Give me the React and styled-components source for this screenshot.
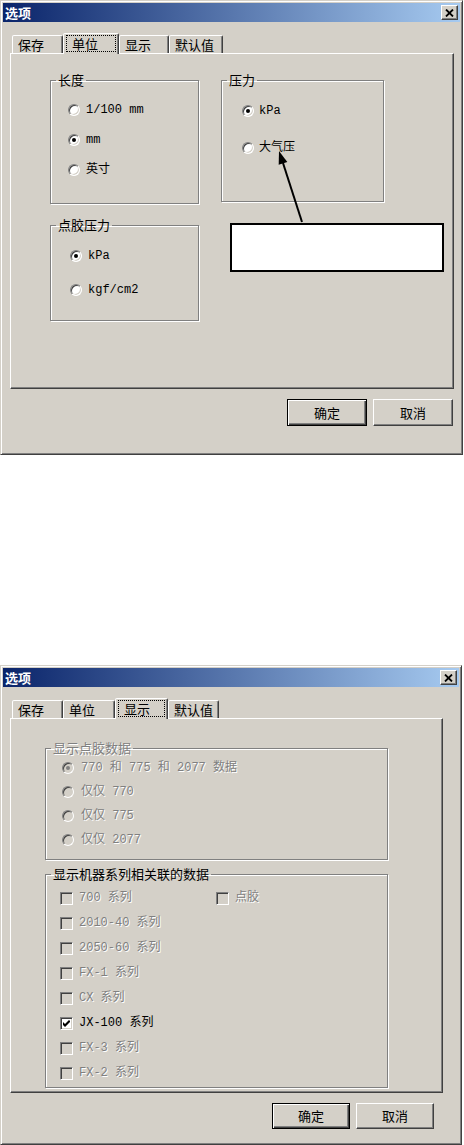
import React from 'react'
import styled, { createGlobalStyle, css } from 'styled-components'

const FACE = '#d4d0c8'
const SHADOW = '#808080'
const DARK = '#404040'
const CJK = '"Noto Sans CJK SC", sans-serif'
const LABEL = '"Liberation Mono", "Noto Sans CJK SC", monospace'

const GlobalStyle = createGlobalStyle`
  body {
    margin: 0;
    background: #fff;
  }
`

const Page = styled.div`
  width: 464px;
  display: flex;
  flex-direction: column;
  gap: 210px;
`

const Window = styled.div`
  box-sizing: border-box;
  width: ${p => p.$w}px;
  height: ${p => p.$h}px;
  background: ${FACE};
  border: 1px solid;
  border-color: ${FACE} ${DARK} ${DARK} ${FACE};
  box-shadow: inset 1px 1px #fff, inset -1px -1px ${SHADOW};
  padding: 2px;
  display: flex;
  flex-direction: column;
`

const TitleBar = styled.div`
  height: 19px;
  flex: none;
  display: flex;
  align-items: center;
  justify-content: space-between;
  padding: 0 2px 0 2px;
  background: linear-gradient(to right, #0a246a, #a6caf0);
`

const Title = styled.span`
  color: #fff;
  font: bold 13px/19px ${CJK};
`

const CloseBox = styled.div`
  box-sizing: border-box;
  width: 17px;
  height: 15px;
  background: ${FACE};
  border: 1px solid;
  border-color: #fff ${DARK} ${DARK} #fff;
  box-shadow: inset -1px -1px ${SHADOW};
  display: flex;
  align-items: center;
  justify-content: center;
`

const Body = styled.div`
  padding: 11px 0 0 7px;
  display: flex;
  flex-direction: column;
`

const TabStrip = styled.div`
  height: 20px;
  display: flex;
  align-items: flex-end;
  padding-left: 2px;
  position: relative;
  z-index: 1;
`

const Tab = styled.div`
  box-sizing: border-box;
  width: ${p => p.$w}px;
  height: ${p => (p.$active ? 21 : 18)}px;
  margin-bottom: ${p => (p.$active ? -1 : 0)}px;
  background: ${FACE};
  border: 1px solid;
  border-bottom: none;
  border-color: #fff ${DARK} transparent #fff;
  box-shadow: inset -1px 0 ${SHADOW};
  border-radius: 2px 2px 0 0;
  font: 13px/16px ${CJK};
  color: #000;
  display: flex;
  padding: ${p => (p.$active ? '1px 2px 2px 2px' : '1px 0 0 5px')};
`

const FocusRing = styled.span`
  flex: 1;
  border: 1px dotted #000;
  padding-left: 5px;
`

const Panel = styled.div`
  position: relative;
  box-sizing: border-box;
  width: ${p => p.$w}px;
  height: ${p => p.$h}px;
  border: 1px solid;
  border-color: #fff ${DARK} ${DARK} #fff;
  box-shadow: inset -1px -1px ${SHADOW};
`

const UnitsLayout = styled.div`
  display: flex;
  align-items: flex-start;
  gap: 22px;
  padding: 19px 0 0 39px;
`

const Column = styled.div`
  width: ${p => p.$w}px;
  display: flex;
  flex-direction: column;
  gap: ${p => p.$gap || 0}px;
`

const DisplayLayout = styled.div`
  width: 343px;
  display: flex;
  flex-direction: column;
  gap: 7px;
  padding: 22px 0 0 34px;
`

const GroupBox = styled.fieldset`
  box-sizing: border-box;
  margin: 0;
  min-width: 0;
  width: 100%;
  height: ${p => p.$h}px;
  padding: 0;
  border: 1px solid ${SHADOW};
  box-shadow: inset 1px 1px #fff, 1px 1px #fff;
`

const Legend = styled.legend`
  margin-left: 5px;
  padding: 0 2px;
  font: 13px/14px ${CJK};
  color: ${p => (p.$disabled ? SHADOW : '#000')};
  text-shadow: ${p => (p.$disabled ? '1px 1px 0 #fff' : 'none')};
`

const OptionList = styled.div`
  display: flex;
  flex-direction: column;
  gap: ${p => p.$gap}px;
  padding: ${p => p.$top}px 0 0 ${p => p.$left}px;
`

const OptionRow = styled.div`
  display: flex;
`

const Option = styled.label`
  height: 16px;
  width: ${p => (p.$w ? `${p.$w}px` : 'auto')};
  display: flex;
  align-items: center;
  gap: ${p => p.$gap || 6}px;
`

const RadioCircle = styled.span`
  position: relative;
  flex: none;
  box-sizing: border-box;
  width: 12px;
  height: 12px;
  border-radius: 50%;
  background: ${p => (p.$disabled ? FACE : '#fff')};
  border: 1px solid;
  border-color: ${SHADOW} #fff #fff ${SHADOW};
  box-shadow: inset 1px 1px ${DARK}, inset -1px -1px ${FACE};
  ${p => p.$checked && css`
    &::after {
      content: '';
      position: absolute;
      left: 3px;
      top: 3px;
      width: 4px;
      height: 4px;
      border-radius: 50%;
      background: ${p.$disabled ? SHADOW : '#000'};
    }
  `}
`

const CheckSquare = styled.span`
  flex: none;
  box-sizing: border-box;
  width: 13px;
  height: 13px;
  background: ${p => (p.$disabled ? FACE : '#fff')};
  border: 1px solid;
  border-color: ${SHADOW} #fff #fff ${SHADOW};
  box-shadow: inset 1px 1px ${DARK}, inset -1px -1px ${FACE};
  display: flex;
  align-items: center;
  justify-content: center;
`

const OptionText = styled.span`
  font: 12px/16px ${LABEL};
  white-space: pre;
  color: ${p => (p.$disabled ? SHADOW : '#000')};
  text-shadow: ${p => (p.$disabled ? '1px 1px 0 #fff' : 'none')};
`

const Callout = styled.div`
  position: absolute;
  left: 219px;
  top: 169px;
  width: 214px;
  height: 49px;
  box-sizing: border-box;
  background: #fff;
  border: 2px solid #000;
`

const ArrowSvg = styled.svg`
  position: absolute;
  left: 258px;
  top: 92px;
  overflow: visible;
`

const ButtonRow = styled.div`
  display: flex;
  justify-content: flex-end;
  gap: 6px;
  padding: 10px ${p => p.$right}px 0 0;
  width: ${p => p.$w}px;
  box-sizing: border-box;
`

const PushButton = styled.button`
  box-sizing: border-box;
  width: ${p => p.$w}px;
  height: ${p => p.$h}px;
  padding: 0;
  background: ${FACE};
  font: 13px/16px ${CJK};
  color: #000;
  border: 1px solid;
  border-color: #fff ${DARK} ${DARK} #fff;
  box-shadow: inset -1px -1px ${SHADOW};
  ${p => p.$default && css`
    border-color: #000;
    box-shadow: inset 1px 1px #fff, inset -1px -1px ${DARK}, inset -2px -2px ${SHADOW};
  `}
`

const CloseGlyph = () => (
  <svg width="9" height="8" viewBox="0 0 9 8">
    <path d="M1 0.5 L8 7.5 M8 0.5 L1 7.5" stroke="#000" strokeWidth="1.8" />
  </svg>
)

const CheckGlyph = () => (
  <svg width="7" height="7" viewBox="0 0 7 7">
    <path d="M0 2 L2 4 L6 0 L7 1 L7 2 L2 7 L0 5 Z" fill="#000" />
  </svg>
)

const Radio = ({ label, checked, disabled, gap }) => (
  <Option $gap={gap}>
    <RadioCircle $checked={checked} $disabled={disabled} />
    <OptionText $disabled={disabled}>{label}</OptionText>
  </Option>
)

const Check = ({ label, checked, disabled, w }) => (
  <Option $w={w}>
    <CheckSquare $disabled={disabled}>{checked && <CheckGlyph />}</CheckSquare>
    <OptionText $disabled={disabled}>{label}</OptionText>
  </Option>
)

const Dialog = ({ w, h, tabs, active, panelW, panelH, buttonW, buttonH, buttonRight, children }) => (
  <Window $w={w} $h={h}>
    <TitleBar>
      <Title>选项</Title>
      <CloseBox><CloseGlyph /></CloseBox>
    </TitleBar>
    <Body>
      <TabStrip>
        {tabs.map(([name, tw], i) => (
          <Tab key={name} $w={tw} $active={i === active}>
            {i === active ? <FocusRing>{name}</FocusRing> : name}
          </Tab>
        ))}
      </TabStrip>
      <Panel $w={panelW} $h={panelH}>{children}</Panel>
      <ButtonRow $w={panelW} $right={buttonRight}>
        <PushButton $default $w={buttonW} $h={buttonH}>确定</PushButton>
        <PushButton $w={buttonW} $h={buttonH}>取消</PushButton>
      </ButtonRow>
    </Body>
  </Window>
)

const UnitsDialog = () => (
  <Dialog
    w={463} h={455}
    tabs={[['保存', 51], ['单位', 56], ['显示', 50], ['默认值', 54]]}
    active={1}
    panelW={444} panelH={336}
    buttonW={80} buttonH={27} buttonRight={1}
  >
    <UnitsLayout>
      <Column $w={149} $gap={14}>
        <GroupBox $h={131}>
          <Legend>长度</Legend>
          <OptionList $top={15} $left={17} $gap={14}>
            <Radio label="1/100 mm" />
            <Radio label="mm" checked />
            <Radio label="英寸" />
          </OptionList>
        </GroupBox>
        <GroupBox $h={103}>
          <Legend>点胶压力</Legend>
          <OptionList $top={16} $left={19} $gap={18}>
            <Radio label="kPa" checked />
            <Radio label="kgf/cm2" />
          </OptionList>
        </GroupBox>
      </Column>
      <Column $w={163}>
        <GroupBox $h={129}>
          <Legend>压力</Legend>
          <OptionList $top={16} $left={20} $gap={21}>
            <Radio label="kPa" checked gap={5} />
            <Radio label="大气压" gap={5} />
          </OptionList>
        </GroupBox>
      </Column>
    </UnitsLayout>
    <ArrowSvg width="40" height="80" viewBox="0 0 40 80">
      <line x1="33" y1="76" x2="14" y2="17" stroke="#000" strokeWidth="2" />
      <polygon points="10,5 18.3,16 9.7,18.8" fill="#000" />
    </ArrowSvg>
    <Callout />
  </Dialog>
)

const DisplayDialog = () => (
  <Dialog
    w={462} h={480}
    tabs={[['保存', 51], ['单位', 52], ['显示', 53], ['默认值', 51]]}
    active={2}
    panelW={433} panelH={375}
    buttonW={78} buttonH={26} buttonRight={9}
  >
    <DisplayLayout>
      <GroupBox $h={119}>
        <Legend $disabled>显示点胶数据</Legend>
        <OptionList $top={5} $left={16} $gap={8}>
          <Radio label="770 和 775 和 2077 数据" checked disabled gap={7} />
          <Radio label="仅仅 770" disabled gap={7} />
          <Radio label="仅仅 775" disabled gap={7} />
          <Radio label="仅仅 2077" disabled gap={7} />
        </OptionList>
      </GroupBox>
      <GroupBox $h={221}>
        <Legend>显示机器系列相关联的数据</Legend>
        <OptionList $top={9} $left={14} $gap={9}>
          <OptionRow>
            <Check label="700 系列" disabled w={156} />
            <Check label="点胶" disabled />
          </OptionRow>
          <Check label="2010-40 系列" disabled />
          <Check label="2050-60 系列" disabled />
          <Check label="FX-1 系列" disabled />
          <Check label="CX 系列" disabled />
          <Check label="JX-100 系列" checked />
          <Check label="FX-3 系列" disabled />
          <Check label="FX-2 系列" disabled />
        </OptionList>
      </GroupBox>
    </DisplayLayout>
  </Dialog>
)

export default function App() {
  return (
    <>
      <GlobalStyle />
      <Page>
        <UnitsDialog />
        <DisplayDialog />
      </Page>
    </>
  )
}
